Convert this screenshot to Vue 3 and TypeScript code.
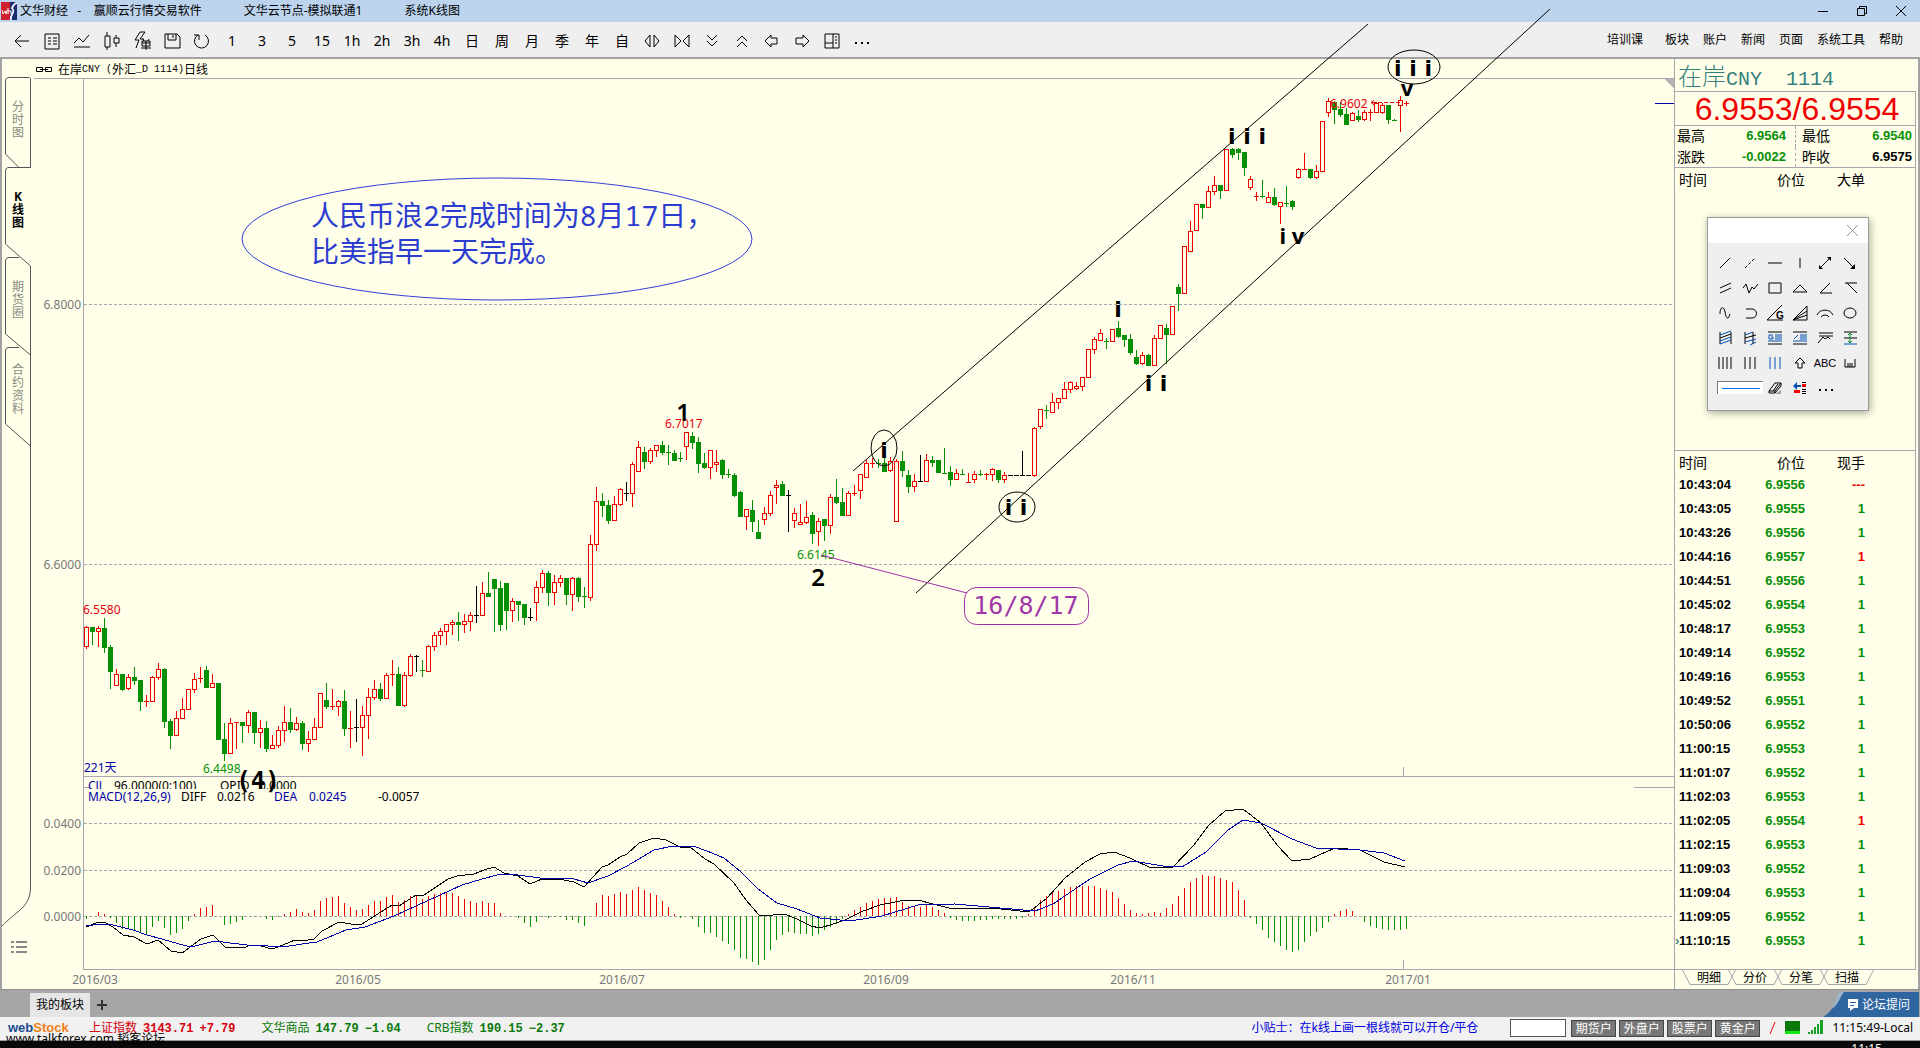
<script setup lang="ts">
type Kind = 'r' | 'g' | 'b'
interface Candle { x: number; kind: Kind; high: number; top: number; bottom: number; low: number }
interface Tick { time: string; price: string; lot: string; tone: string }

// Each entry: colour, high, body top, body bottom, low, in thirds of a pixel below the segment origin.
const segments: { origin: number; rows: string }[] = [
  {
    origin: 560,
    rows: `r198,203,260,264 g202,202,215,254 r198,205,214,258 g174,205,262,278 g255,262,335,386 r327,343,377,377
g343,343,389,392 r343,352,385,387 g321,351,361,374 g361,361,424,450 r405,424,424,440 r348,352,424,424 r311,327,352,357
g324,328,485,503 g477,484,527,566 r453,474,526,526 r415,448,475,475 r388,388,448,448 r339,357,388,398 r323,356,356,368
g318,331,383,383 r343,370,382,382 g370,370,539,539 g489,538,580,600 r474,489,580,580 r488,488,488,566 g486,487,497,548
r452,457,497,518 g457,457,518,551 r480,505,517,562 g484,505,566,575 r525,556,566,566 r499,511,556,563 r438,487,511,545
g444,487,509,517 r471,490,508,510 g484,490,551,569 r514,538,550,575 r475,502,538,538 r400,400,502,502 g369,420,440,444
r388,439,439,448 r420,424,439,467 g390,423,506,525 r453,504,504,563 b418,502,502,543 r438,466,502,585 r385,412,466,536
r362,388,412,418 g370,387,416,422 r339,346,416,416 r300,344,344,375 g321,342,437,437 r336,346,436,438 r283,290,346,350
b287,290,290,335 g300,332,332,350 r255,259,335,335 r216,226,260,270 r204,214,226,254 r193,193,214,252 r181,187,193,224
g156,187,194,242 r162,184,193,218 r156,166,184,212 b78,166,166,188 r67,100,166,166 g37,100,110,110 g57,58,86,215
g64,85,194,210 g70,70,152,208 r114,124,152,185 g124,124,134,182 g133,133,173,194 b144,172,172,180 r64,82,127,180
r30,40,82,98 g34,40,98,136 r46,67,97,134 r45,55,67,80 g55,55,104,134 r52,55,103,150 g52,55,110,124 g82,110,110,143`,
  },
  {
    origin: 380,
    rows: `r467,493,652,662 r323,364,493,510 g340,364,377,410 g362,376,422,430 r350,373,421,421 r325,328,374,376
b308,340,340,360 r248,254,340,380 r184,202,274,274 g202,216,245,264 r204,211,244,250 r196,196,211,228 g184,195,218,222
g196,218,218,252 g210,219,242,242 g216,236,236,244 r157,157,199,238 g157,168,188,206 g172,186,250,278 g220,250,263,266
r211,211,262,294 r211,247,253,275 g237,240,284,296 g268,284,284,292 g280,286,345,350 g334,337,410,410 r388,388,409,449
g361,391,425,455 g421,457,476,476 r382,400,419,434 r334,346,400,406 r300,316,322,370 g304,312,346,346 b330,346,346,453
r385,400,422,443 r373,427,433,433 r364,412,427,430 g396,406,461,491 r414,424,454,497 g417,418,437,482 r343,352,436,461
g298,351,368,370 g324,367,407,407 r333,340,406,406 r315,339,339,346 r283,283,331,355 r240,250,293,293 r235,250,250,262
g238,249,249,262 g222,249,275,275 r232,244,271,275 r238,244,424,424 g213,243,272,290 g270,287,320,338 r283,304,320,334
b226,304,304,304 r222,241,304,304 g229,241,246,260 g240,241,278,278 g205,279,279,280 g258,278,299,317 r267,280,298,298
g267,282,282,284 r279,308,308,308 r273,283,298,307 g270,284,284,286 r280,284,284,298 r265,268,283,300 g270,271,299,307
r276,286,298,306 b286,286,286,286 b286,286,286,286 b213,286,286,286 b286,286,286,286`,
  },
  {
    origin: 60,
    rows: `r1102,1105,1246,1250 r1048,1048,1099,1106 g1035,1052,1052,1074 r1000,1027,1057,1057 r1015,1015,1027,1044
r966,988,1015,1015 r963,967,988,998 r966,979,985,988 r952,952,979,992 r868,868,952,952 r832,838,868,880 r808,820,841,841
g835,845,845,866 r808,808,844,844 g783,804,828,832 g825,826,838,860 g823,838,878,884 g870,891,911,914 r876,886,910,912
g882,886,917,917 r826,835,916,916 r796,796,835,835 g792,804,824,911 r739,739,823,823 g673,682,701,752 r559,559,700,700
r483,514,574,574 r433,433,511,511 g432,433,443,476 r378,394,442,442 r348,376,394,404 g376,376,391,416 r268,268,391,391
g264,268,284,293 g264,268,278,299 g276,277,323,347 r348,358,382,388 r396,409,409,422 g360,410,410,413 r396,412,427,428
g384,412,434,437 r427,427,439,490 g378,430,430,438 g421,423,440,449 r324,328,352,356 r279,328,328,328 g328,328,353,356
r316,334,352,354 r184,184,334,334 r114,124,157,170 g124,126,149,191 g126,148,163,168 g145,163,194,194 r156,160,181,181
g150,169,177,184 r150,157,178,180 r147,156,156,180 r126,130,157,157 r130,136,157,160 g135,136,178,191 g178,180,180,182
r108,121,136,215 r124,131,131,137`,
  },
]

const FIRST_X = 86
const STEP = 6
const colour: Record<Kind, string> = { r: '#f00000', g: '#069006', b: '#000000' }

const candles: Candle[] = segments
  .flatMap(s => s.rows.split(/\s+/).map(row => ({
    kind: row[0] as Kind,
    y: row.slice(1).split(',').map(v => s.origin + Math.floor(Number(v) / 3)),
  })))
  .map(({ kind, y }, i) => ({ x: FIRST_X + i * STEP, kind, high: y[0], top: y[1], bottom: y[2], low: y[3] }))

const wicks = (kind: Kind) => candles.filter(c => c.kind === kind).map(c => {
  const parts: string[] = []
  if (c.bottom - c.top < 2) {
    parts.push(`M${c.x} ${c.high}h1V${c.low + 1}h-1z`)
    parts.push(`M${c.x - 2} ${c.top}h5v1h-5z`)
  } else {
    if (c.high < c.top) parts.push(`M${c.x} ${c.high}h1V${c.top}h-1z`)
    if (c.low > c.bottom) parts.push(`M${c.x} ${c.bottom}h1V${c.low + 1}h-1z`)
    if (kind === 'g') parts.push(`M${c.x - 2} ${c.top}h5V${c.bottom + 1}h-5z`)
    else parts.push(`M${c.x - 2} ${c.top}h5V${c.bottom + 1}h-5zM${c.x - 1} ${c.top + 1}V${c.bottom}h3V${c.top + 1}z`)
  }
  return parts.join('')
}).join('')
const kinds: Kind[] = ['r', 'g', 'b']

const histogram = [
  -3, 0, 4, 2, -2, -7, -13, -13, -14, -17, -18, -11, -5, -12, -19, -17, -13, -5, 2, 8, 9, 11, 0, -9, -8, -6, -4, 0, -1, 0,
  -3, -4, -1, 2, 4, 7, 4, 3, 6, 15, 18, 19, 20, 13, 9, 6, 7, 11, 15, 15, 19, 21, 14, 16, 20, 20, 17, 20, 22, 23,
  24, 23, 20, 17, 15, 13, 15, 13, 13, 3, 0, 0, -2, -7, -11, -6, -1, -2, -1, -1, -4, -4, -7, -10, 0, 13, 21, 20, 22, 24,
  22, 26, 29, 26, 23, 21, 15, 9, 2, -2, 0, -3, -11, -17, -17, -21, -25, -28, -34, -42, -43, -46, -49, -44, -34, -24, -19, -16, -17, -18,
  -18, -20, -18, -14, -11, -8, -3, 2, 6, 9, 13, 15, 17, 18, 18, 19, 14, 10, 10, 9, 11, 9, 6, 3, -2, -4, -5, -5, -5, -4,
  -4, -3, -3, -3, -3, -3, -2, 2, 9, 16, 20, 23, 25, 27, 29, 30, 30, 30, 30, 28, 26, 24, 18, 12, 6, 3, 2, 3, 4, 3,
  8, 12, 20, 28, 34, 38, 41, 40, 40, 38, 36, 34, 26, 16, -2, -8, -14, -22, -26, -30, -34, -36, -34, -26, -20, -16, -12, -6, 2, 5,
  7, 5, 0, -6, -10, -12, -13, -14, -14, -14, -13,
]
const ZERO_Y = 916
const bars = (sign: number) => histogram
  .map((h, i) => (Math.sign(h) === sign ? `M${FIRST_X + i * STEP} ${ZERO_Y}h1v${-h}h-1z` : ''))
  .join('')

const diff = '86,927 96,923 104,922 113,927 123,935 134,937 147,944 158,940 171,951 182,953 193,945 201,939 213,935 225,947 243,948 251,945 261,946 272,949 283,945 295,940 302,941 314,939 322,931 339,922 351,924 362,924 373,917 392,905 399,906 416,895 424,895 448,879 457,876 474,874 484,870 494,867 504,873 518,876 530,884 542,879 559,879 574,882 584,887 593,877 602,867 608,865 620,857 627,854 639,843 654,838 666,840 680,847 690,847 705,859 714,864 734,883 746,900 759,915 770,916 776,914 787,915 799,920 811,926 820,928 833,924 845,920 863,911 880,905 900,901 918,900 933,904 949,908 992,908 1029,912 1047,898 1065,878 1085,862 1100,854 1114,852 1130,858 1151,868 1173,867 1194,845 1209,825 1225,811 1243,809 1261,823 1277,845 1292,861 1310,859 1335,848 1360,850 1384,862 1405,867'
const dea = '86,926 101,924 113,925 133,930 147,935 162,939 179,944 191,947 215,941 230,943 247,945 268,946 283,947 302,944 317,942 346,930 365,927 394,916 416,906 438,896 462,885 482,879 501,874 518,875 540,878 574,879 588,883 608,876 627,866 654,850 673,846 693,846 707,851 724,858 741,872 758,889 777,903 797,909 820,918 850,921 882,916 918,905 955,904 1000,908 1035,911 1053,904 1090,879 1118,865 1133,861 1163,866 1182,867 1206,852 1228,830 1243,820 1261,823 1292,839 1316,848 1360,850 1384,853 1405,861'

const gridLines = [
  { y: 304, label: '6.8000' }, { y: 564, label: '6.6000' },
  { y: 823, label: '0.0400' }, { y: 870, label: '0.0200' }, { y: 916, label: '0.0000' },
]
const months = [
  { x: 95, label: '2016/03' }, { x: 358, label: '2016/05' }, { x: 622, label: '2016/07' },
  { x: 886, label: '2016/09' }, { x: 1133, label: '2016/11' }, { x: 1408, label: '2017/01' },
]

const periods = ['1', '3', '5', '15', '1h', '2h', '3h', '4h', '日', '周', '月', '季', '年', '自']
const leadIcons = [
  { name: '返回', d: 'M17 10H4M9 4L3 10L9 16' },
  { name: '报价', d: 'M3 3H17V18H3ZM6 7H9M11 7H15M6 10H9M11 10H15M6 13H9M11 13H15' },
  { name: '走势', d: 'M2 12L7 7L11 11L17 4M2 16H18' },
  { name: 'K线', d: 'M3 5H8V16H3ZM5 1V5M5 16V19M12 7H17V12H12ZM14 4V7M14 12V16' },
  { name: '闪弹', d: 'M8 1L3 9H7L4 17M8 1H13L8 8H12M11 8L12 10M17 8L16 10M10 10H18V15H10ZM10 12H18M14 10V19M9 17H19' },
  { name: '保存', d: 'M3 3H15L18 6V17H3ZM6 3V9H14V3M11 4V7' },
  { name: '刷新', d: 'M6 4A7 7 0 1 0 13 4M2 4H7V9' },
]
const tailIcons = [
  { name: '横向缩小', d: 'M8 4L3 10L8 16ZM12 4L17 10L12 16Z' },
  { name: '横向放大', d: 'M3 4L9 10L3 16ZM17 4L11 10L17 16Z' },
  { name: '向下', d: 'M5 4L10 9L15 4M5 10L10 15L15 10' },
  { name: '向上', d: 'M5 10L10 5L15 10M5 16L10 11L15 16' },
  { name: '左移', d: 'M3 10L9 4V7H15V13H9V16Z' },
  { name: '右移', d: 'M17 10L11 4V7H4V13H11V16Z' },
  { name: '布局', d: 'M3 3H17V17H3ZM11 3V17M3 12H11M13 6H15M13 9H15M13 12H15' },
]
const menus = ['板块', '账户', '新闻', '页面', '系统工具', '帮助']
const sideTabs = [
  { label: '分时图', on: false }, { label: 'K线图', on: true },
  { label: '期货圈', on: false }, { label: '合约资料', on: false },
]

// Drawing tools, five rows of six; k = black strokes, u = blue, n = green, f = black fill.
const tools: { name: string; k?: string; u?: string; n?: string; f?: string; dash?: boolean }[] = [
  { name: '直线', k: 'M5 15L15 5' },
  { name: '虚线', k: 'M5 15L15 5', dash: true },
  { name: '水平线', k: 'M3 10H17' },
  { name: '垂直线', k: 'M10 5V15' },
  { name: '双箭头', k: 'M5 15L15 5', f: 'M4 12L8 16L4 16ZM16 8L12 4L16 4Z' },
  { name: '箭头', k: 'M4 5L14 15', f: 'M15 11V16H10Z' },
  { name: '平行线', k: 'M5 10L16 5M5 15L16 10' },
  { name: '波浪', k: 'M3 10L6 6L9 15L12 9L14 11L18 6' },
  { name: '矩形', k: 'M4 5H16V15H4Z' },
  { name: '三角形', k: 'M3 14L10 7L17 14Z' },
  { name: '角度', k: 'M15 5L5 15H17' },
  { name: '反角', k: 'M5 5H17M7 5L17 15' },
  { name: '正弦', k: 'M5 11C5 3 9 3 10 9S13 18 15 11' },
  { name: '弧线', k: 'M6 6H12A4 4 0 0 1 12 15H6' },
  { name: '江恩角', k: 'M2 17L17 2M2 17H18' },
  { name: '扇形', k: 'M3 17L17 3V17ZM3 17L17 8M3 17L17 12' },
  { name: '圆弧', k: 'M2 12A9 9 0 0 1 18 12M6 14A5 5 0 0 1 14 14' },
  { name: '椭圆', k: 'M10 5A6 5 0 1 0 10 15A6 5 0 1 0 10 5Z' },
  { name: '通道', k: 'M5 4V16M16 4V16M5 10L16 6', u: 'M5 7L16 3M5 13L16 9M5 16L16 12' },
  { name: '通道二', k: 'M5 4V16M13 4V16M5 10L16 7', u: 'M5 7L13 4M5 14L16 11M10 17L16 14' },
  { name: '黄金分割', k: 'M3 4H17M3 16H17', u: 'M10 7H17M10 9H17M10 11H17M3 13H17M8 7H4V11H8V9H6' },
  { name: '百分比', k: 'M3 4H17M3 16H17', u: 'M10 7H17M10 9H17M10 11H17M3 13H17M4 11L8 7' },
  { name: '区间', k: 'M4 5H18M4 8H18M3 15L8 9L10 11L13 9L15 11' },
  { name: '测量', k: 'M4 4H17M4 10H17', u: 'M4 16H17', n: 'M10 5V15M8 7L10 5L12 7M8 13L10 15L12 13' },
  { name: '周期线', k: 'M4 4V16M8 4V16M12 4V16M16 4V16' },
  { name: '等距线', k: 'M5 4V16M10 4V16M15 4V16' },
  { name: '斐波那契', u: 'M5 4V16M10 4V16M15 4V16' },
  { name: '上箭头', k: 'M10 5L15 10H12V15H8V10H5Z' },
  { name: '文字' },
  { name: '标尺', k: 'M5 6V14H15V6M8 10V14M10 10V14M12 10V14' },
]

const ticks: Tick[] = [
  ['10:43:04', '6.9556', '---'], ['10:43:05', '6.9555', '1'], ['10:43:26', '6.9556', '1'], ['10:44:16', '6.9557', '1r'],
  ['10:44:51', '6.9556', '1'], ['10:45:02', '6.9554', '1'], ['10:48:17', '6.9553', '1'], ['10:49:14', '6.9552', '1'],
  ['10:49:16', '6.9553', '1'], ['10:49:52', '6.9551', '1'], ['10:50:06', '6.9552', '1'], ['11:00:15', '6.9553', '1'],
  ['11:01:07', '6.9552', '1'], ['11:02:03', '6.9553', '1'], ['11:02:05', '6.9554', '1r'], ['11:02:15', '6.9553', '1'],
  ['11:09:03', '6.9552', '1'], ['11:09:04', '6.9553', '1'], ['11:09:05', '6.9552', '1'], ['11:10:15', '6.9553', '1'],
].map(([time, price, lot]) => ({
  time, price, lot: lot.replace('r', ''), tone: lot === '1' ? 'up' : 'down',
}))
const detailTabs = ['明细', '分价', '分笔', '扫描']
const accounts = ['期货户', '外盘户', '股票户', '黄金户']
const indices = [
  { name: '上证指数', value: '3143.71', change: '+7.79', tone: 'rise' },
  { name: '文华商品', value: '147.79', change: '−1.04', tone: 'fall' },
  { name: 'CRB指数', value: '190.15', change: '−2.37', tone: 'fall' },
]
</script>

<template>
  <div class="window">
    <header class="titlebar">
      <svg class="logo" width="18" height="20" viewBox="0 0 18 20" aria-hidden="true">
        <path d="M1 1H17V19H1Z" fill="#1b2a6b" /><path d="M1 1H10V19H1Z" fill="#d0202c" />
        <path d="M11 19C10 12 16 12 12 7C14 3 16 2 17 2" stroke="#e8f0ff" stroke-width="2" fill="none" />
        <path d="M2 9L3 13L5 10L6 13L7 9M8 7V13M8 10H11V13" stroke="#fff" fill="none" />
      </svg>
      <span>文华财经&nbsp;&nbsp; -&nbsp;&nbsp;&nbsp; 赢顺云行情交易软件</span>
      <span>文华云节点-模拟联通1</span>
      <span>系统K线图</span>
      <div class="winbtns">
        <button type="button" aria-label="最小化"><svg width="12" height="12"><path d="M1 6.500H11" /></svg></button>
        <button type="button" aria-label="还原"><svg width="12" height="12"><path d="M1.500 3.500H8.500V10.500H1.500ZM3.500 3.500V1.500H10.500V8.500H8.500" /></svg></button>
        <button type="button" aria-label="关闭"><svg width="12" height="12"><path d="M1 1L11 11M11 1L1 11" /></svg></button>
      </div>
    </header>

    <nav class="toolbar">
      <button v-for="icon in leadIcons" :key="icon.name" type="button" :aria-label="icon.name">
        <svg width="20" height="20" viewBox="0 0 20 20"><path :d="icon.d" /></svg>
      </button>
      <button v-for="p in periods" :key="p" type="button">{{ p }}</button>
      <button v-for="icon in tailIcons" :key="icon.name" type="button" :aria-label="icon.name">
        <svg width="20" height="20" viewBox="0 0 20 20"><path :d="icon.d" /></svg>
      </button>
      <button type="button" aria-label="更多">
        <svg width="20" height="20" viewBox="0 0 20 20"><path d="M3 11h2v2h-2zM9 11h2v2h-2zM15 11h2v2h-2z" class="solid" /></svg>
      </button>
      <div class="menus">
        <a href="#" class="course">培训课</a>
        <a v-for="m in menus" :key="m" href="#">{{ m }}</a>
      </div>
    </nav>

    <main class="workspace">
      <aside class="side">
        <svg class="side-lines" width="32" height="930" viewBox="2 59 32 930" aria-hidden="true">
          <path d="M30.500 167.500V78.500Q30 77.500 28 77.500H8Q5.500 78 5.500 81V154L19 167.500M30.500 167.500H8Q5.500 168 5.500 171V244L30.500 266V888C30 908 16 911 2 926M19 257.500H8Q5.500 258 5.500 261V334L30.500 355M19 347.500H8Q5.500 348 5.500 351V424L30.500 446" />
          <path d="M11 942H14M16 942H27M11 947H14M16 947H27M11 952H14M16 952H27" class="menu-glyph" />
        </svg>
        <button v-for="t in sideTabs" :key="t.label" type="button" :class="{ on: t.on }"><span>{{ t.label }}</span></button>
      </aside>

      <section class="chart">
        <h1 class="chart-title">
          <svg width="16" height="8" viewBox="0 0 16 8" aria-hidden="true"><path d="M6.500 3V1.500H.5V5.500H6.500V4M9.500 3V1.500H15.500V5.500H9.500V4M4 3.500H12" /></svg>
          在岸<span class="half">CNY (</span>外汇<span class="half">_D 1114)</span>日线
        </h1>
        <svg class="plot" viewBox="34 78 1640 911" role="img" aria-label="在岸CNY日线图">
          <g class="frame">
            <path d="M34 78.500H1674M83.500 78V969.500H1674M83 776.500H1674M83 787.500H89M1634 787.500H1674M1403.500 767V776M1403.500 960V969" />
            <path v-for="g in gridLines" :key="g.y" :d="`M84 ${g.y + 0.5}H1674`" stroke-dasharray="3 2" />
            <path d="M1664 79H1674V88Z" class="corner" />
            <path d="M1655 103.500H1674" class="mark" />
          </g>
          <g class="axis">
            <text v-for="g in gridLines" :key="g.y" x="81" :y="g.y + 5" text-anchor="end">{{ g.label }}</text>
            <text v-for="m in months" :key="m.x" :x="m.x" y="984" text-anchor="middle">{{ m.label }}</text>
          </g>

          <g class="crisp">
            <path v-for="k in kinds" :key="k" :d="wicks(k)" :fill="colour[k]" />
            <path :d="bars(1)" fill="#f00000" />
            <path :d="bars(-1)" fill="#069006" />
            <polyline :points="diff" stroke="#000" fill="none" />
            <polyline :points="dea" stroke="#0000a8" fill="none" />
          </g>

          <g class="small">
            <g fill="#e80010">
              <text x="83" y="614">6.5580</text>
              <text x="665" y="428">6.7017</text>
              <text x="1330" y="108">6.9602</text>
              <path d="M1372 102.500H1400M1371 102.500L1375 99.500M1371 102.500L1375 105.500" stroke="#e80010" stroke-dasharray="4 2" />
            </g>
            <g fill="#069006">
              <text x="203" y="773">6.4498</text>
              <text x="797" y="559">6.6145</text>
            </g>
            <text x="84" y="772" class="navy">221天</text>
            <svg x="84" y="779" width="300" height="10" viewBox="84 779 300 10">
              <text x="88" y="790" class="navy">CJL</text>
              <text x="114" y="790">96.0000(0:100)</text>
              <text x="220" y="790">OPID</text>
              <text x="259" y="790">0.0000</text>
            </svg>
            <text x="88" y="801" class="navy">MACD(12,26,9)</text>
            <text x="181" y="801">DIFF</text>
            <text x="217" y="801">0.0216</text>
            <text x="274" y="801" class="navy">DEA</text>
            <text x="309" y="801" class="navy">0.0245</text>
            <text x="378" y="801">-0.0057</text>
          </g>

          <g class="strokes">
            <path d="M853 471L1368 24M916 593L1550 9" />
            <ellipse cx="884" cy="448" rx="13" ry="18" />
            <ellipse cx="1017" cy="507" rx="18" ry="15" />
            <ellipse cx="1414" cy="67" rx="26" ry="17" />
            <ellipse cx="497" cy="239" rx="255" ry="61" class="blue" />
            <path d="M821 555L967 593" class="purple" />
            <rect x="964.500" y="587.500" width="124" height="37" rx="12" class="purple" />
          </g>
          <g class="wave" text-anchor="middle">
            <text x="683" y="421">1</text>
            <text x="818" y="586">2</text>
            <text x="258" y="789" class="degree">(4)</text>
            <text x="1407" y="96" class="letter">v</text>
            <text x="1292" y="244" class="letter">i v</text>
          </g>
          <g class="roman" text-anchor="middle">
            <text x="884" y="458">i</text>
            <text x="1016" y="515">i i</text>
            <text x="1118" y="317">i</text>
            <text x="1156" y="391">i i</text>
            <text x="1247" y="144">i i i</text>
            <text x="1413" y="76">i i i</text>
          </g>
          <text x="1026" y="614" text-anchor="middle" class="date-note">16/8/17</text>
          <g class="note">
            <text x="311" y="226">人民币浪2完成时间为8月17日，</text>
            <text x="311" y="262">比美指早一天完成。</text>
          </g>
        </svg>
      </section>

      <aside class="quote">
        <h2>在岸<span>CNY&nbsp; 1114</span></h2>
        <div class="framed">
          <p class="last">6.9553/6.9554</p>
          <dl class="stats">
            <div><dt>最高</dt><dd class="up">6.9564</dd></div>
            <div><dt>最低</dt><dd class="up">6.9540</dd></div>
            <div><dt>涨跌</dt><dd class="up">-0.0022</dd></div>
            <div><dt>昨收</dt><dd>6.9575</dd></div>
          </dl>
          <div class="big-orders">
            <table class="trades">
              <thead><tr><th>时间</th><th>价位</th><th>大单</th></tr></thead>
            </table>
            <div class="palette" role="dialog" aria-label="画线工具">
              <div class="palette-head">
                <button type="button" aria-label="关闭画线工具"><svg width="11" height="11"><path d="M0 0L11 11M11 0L0 11" /></svg></button>
              </div>
              <div class="palette-grid">
                <button v-for="t in tools" :key="t.name" type="button" :aria-label="t.name">
                  <svg width="20" height="20" viewBox="0 0 20 20">
                    <path v-if="t.k" :d="t.k" class="ink" :stroke-dasharray="t.dash ? '3 2' : undefined" />
                    <path v-if="t.u" :d="t.u" class="ink blue" />
                    <path v-if="t.n" :d="t.n" class="ink green" />
                    <path v-if="t.f" :d="t.f" />
                    <text v-if="t.name === '文字'" x="10" y="14" text-anchor="middle">ABC</text>
                    <text v-if="t.name === '江恩角'" x="15" y="16" text-anchor="middle" class="gann">G</text>
                  </svg>
                </button>
                <button type="button" class="line-style" aria-label="线型"><i></i></button>
                <button type="button" aria-label="橡皮">
                  <svg width="20" height="20" viewBox="0 0 20 20"><path d="M10 16H16V12Z" fill="#a0a0a0" /><path d="M4 13L10 5H16L10 13ZM4 13V15H10L16 8V5M10 13V15M8 13L13 6" class="ink" /></svg>
                </button>
                <button type="button" aria-label="颜色">
                  <svg width="20" height="20" viewBox="0 0 20 20"><path d="M3 8L7 4V7H11V9H7V12Z" fill="#0050b0" /><path d="M12 6H16V9H12ZM4 12H10V15H4Z" fill="#f00000" /><path d="M12 4.500H16M12 11.500H16M12 13.500H16M12 15.500H16" class="ink" /></svg>
                </button>
                <button type="button" aria-label="更多工具">
                  <svg width="20" height="20" viewBox="0 0 20 20"><path d="M4 11h2v2h-2zM10 11h2v2h-2zM16 11h2v2h-2z" /></svg>
                </button>
              </div>
            </div>
          </div>
          <table class="trades ticks">
            <thead><tr><th>时间</th><th>价位</th><th>现手</th></tr></thead>
            <tbody>
              <tr v-for="(t, i) in ticks" :key="i" :class="{ latest: i === ticks.length - 1 }">
                <td>{{ t.time }}</td><td class="up">{{ t.price }}</td><td :class="t.tone">{{ t.lot }}</td>
              </tr>
            </tbody>
          </table>
        </div>
        <div class="detail-tabs">
          <button v-for="t in detailTabs" :key="t" type="button">
            <svg width="54" height="16" viewBox="0 0 54 16" aria-hidden="true"><path d="M0 0L8 15.500H46L54 0" /></svg>{{ t }}
          </button>
        </div>
      </aside>
    </main>

    <div class="boards">
      <button type="button" class="board">我的板块</button>
      <button type="button" class="add" aria-label="新建板块"><svg width="10" height="10"><path d="M5 0V10M0 5H10" /></svg></button>
      <a href="#" class="forum">
        <svg class="wedge" width="96" height="25" viewBox="0 0 96 25" aria-hidden="true">
          <path d="M0 25C12 18 12 8 19 0H96V25Z" fill="#2f66a0" /><path d="M9 17L16 0H21C16 6 16 12 9 17Z" fill="#9db4cc" />
        </svg>
        <svg width="12" height="12" viewBox="0 0 12 12" aria-hidden="true"><path d="M1 0H11V9H7L3 12V9H1Z" fill="#fff" /><path d="M3 3.500H9M3 6.500H7" stroke="#2f66a0" /></svg>
        <span>论坛提问</span>
      </a>
    </div>

    <footer class="status">
      <span class="brand"><b>web</b><i>Stock</i></span>
      <span v-for="x in indices" :key="x.name" class="index" :class="x.tone">{{ x.name }}<b>{{ x.value }}</b><b>{{ x.change }}</b></span>
      <span class="tip">小贴士：在k线上画一根线就可以开仓/平仓</span>
      <input type="text" aria-label="合约代码" />
      <button v-for="a in accounts" :key="a" type="button">{{ a }}</button>
      <svg class="signals" width="54" height="18" viewBox="0 0 54 18" aria-hidden="true">
        <path d="M1 15L6 3" stroke="#f00000" />
        <rect x="16" y="2" width="15" height="13" fill="#087808" /><rect x="16" y="12" width="15" height="3" fill="#10e810" />
        <path d="M39 13h2v2h-2zM42 11h2v4h-2zM45 8h2v7h-2zM48 5h2v10h-2zM51 1h3v14h-3z" fill="#18a028" />
      </svg>
      <time>11:15:49-Local</time>
      <span class="watermark">www.talkforex.com 韬客论坛</span>
    </footer>
    <div class="taskbar"><span>11:15</span></div>
  </div>
</template>

<style>
body { margin: 0; overflow: hidden; }
</style>

<style scoped>
.window {
  min-height: 100vh;
  display: flex;
  flex-direction: column;
  font: 12px/16px "Noto Sans", "Noto Sans CJK SC", sans-serif;
  color: #000;
  background: #ffffe9;
}
button { border: 0; margin: 0; padding: 0; background: none; font: inherit; color: inherit; }
a { color: inherit; text-decoration: none; }
svg { display: block; }
h1, h2, p, dl, dd { margin: 0; font-weight: normal; }
.up { color: #069006; }
.down { color: #f00000; }

.titlebar {
  display: flex;
  align-items: center;
  gap: 42px;
  height: 22px;
  padding-bottom: 1px;
  box-sizing: border-box;
  background: #bbd3ec;
  line-height: 20px;
}
.logo { margin-right: -40px; }
.winbtns { margin-left: auto; display: flex; }
.winbtns button { width: 39px; height: 21px; display: flex; align-items: center; justify-content: center; }
.winbtns svg path { fill: none; stroke: #000; }

.toolbar {
  display: flex;
  align-items: center;
  height: 35px;
  padding: 0 17px 0 7px;
  background: #efefef;
  border-bottom: 2px solid #a2a2a2;
}
.toolbar button {
  width: 30px;
  height: 32px;
  padding-top: 3px;
  display: flex;
  align-items: center;
  justify-content: center;
  font-size: 14px;
}
.toolbar svg path { fill: none; stroke: #000; }
.toolbar svg .solid { fill: #000; stroke: none; }
.menus { margin-left: auto; display: flex; gap: 14px; }
.menus .course { margin-right: 8px; }

.workspace { flex: 1; display: flex; align-items: stretch; border-left: 2px solid #a2a2a2; border-bottom: 1px solid #909090; box-sizing: border-box; }
.side { position: relative; width: 32px; padding-top: 18px; box-sizing: border-box; flex: none; }
.side-lines { position: absolute; left: 0; top: 0; }
.side-lines path { fill: none; stroke: #55555c; }
.side-lines .menu-glyph { stroke: #888; stroke-width: 2; shape-rendering: crispEdges; }
.side button { position: relative; width: 32px; height: 90px; padding-bottom: 6px; box-sizing: border-box; display: flex; align-items: center; justify-content: center; color: #8a8a80; }
.side button span { width: 12px; line-height: 13px; word-break: break-all; }
.side .on { color: #000; font-weight: bold; }

.chart { flex: 1; min-width: 0; }
.chart-title { display: flex; align-items: center; height: 19px; padding: 2px 0 0 2px; box-sizing: border-box; font-size: 12px; line-height: 16px; }
.chart-title svg { margin-right: 6px; }
.chart-title svg path { fill: none; stroke: #000; }
.half { font-family: "Liberation Mono", monospace; font-size: 10px; white-space: pre; }
.plot { position: relative; width: 100%; height: auto; overflow: visible; pointer-events: none; z-index: 1; }
.frame path { fill: none; stroke: #a8a4b0; shape-rendering: crispEdges; }
.frame .corner { fill: #b4b4b4; stroke: none; }
.frame .mark { stroke: #0000a8; }
.axis { fill: #77777a; font-size: 12px; }
.crisp { shape-rendering: crispEdges; }
.small { font-size: 12px; }
.small .navy { fill: #0000a8; }
.strokes { fill: none; stroke: #000; }
.strokes .blue { stroke: #3040d8; }
.strokes .purple { stroke: #a030a8; }
.wave { font-size: 24px; font-weight: 600; }
.wave .letter { font-size: 22px; font-weight: bold; }
.wave .degree { font-family: "DejaVu Sans Mono", monospace; font-size: 24px; font-weight: bold; }
.roman { font-family: "DejaVu Sans", sans-serif; font-size: 22px; font-weight: bold; }
.date-note { font-family: "DejaVu Sans Mono", monospace; font-size: 25px; fill: #a038a8; }
.note { font-family: "Noto Sans Mono", "Noto Sans CJK SC", sans-serif; font-size: 28px; fill: #2c3cd0; }

.quote { width: 246px; flex: none; border-left: 1px solid #a8a4b0; border-right: 2px solid #a2a2a2; box-sizing: border-box; display: flex; flex-direction: column; }
.quote h2 { height: 32px; padding: 0 3px; font-size: 24px; line-height: 34px; color: #35807c; font-weight: 300; box-sizing: border-box; }
.quote h2 span { font-family: "Liberation Mono", monospace; font-size: 20px; }
.framed { border: 1px solid #a8a4b0; border-left: 0; margin-right: 2px; height: 877px; flex: none; display: flex; flex-direction: column; }
.last { height: 33px; border-bottom: 1px solid #a8a4b0; font: 32px/34px "Liberation Sans", sans-serif; color: #f00000; text-align: center; padding-left: 4px; }
.stats { display: grid; grid-template-columns: 120px 1fr; height: 41px; border-bottom: 1px solid #a8a4b0; font-size: 14px; line-height: 20px; }
.stats div { display: flex; justify-content: space-between; padding: 0 9px 0 2px; }
.stats div:nth-child(even) { padding: 0 3px 0 6px; border-left: 1px dashed #a8a4b0; }
.stats dd { font: bold 13px/20px "Liberation Sans", sans-serif; }
.big-orders { position: relative; height: 282px; border-bottom: 1px solid #a8a4b0; }
.trades { border-collapse: collapse; table-layout: fixed; width: 190px; font: bold 13px/24px "Liberation Sans", sans-serif; }
.trades th { font: 14px/22px "Noto Sans CJK SC", sans-serif; padding: 0; text-align: right; }
.trades th:first-child, .trades td:first-child { text-align: left; width: 66px; padding-left: 4px; }
.trades th:nth-child(2) { width: 60px; }
.trades td { padding: 0; text-align: right; height: 24px; }
.trades .latest td:first-child { position: relative; }
.latest td:first-child::before { content: "›"; position: absolute; left: 0; top: 0; color: #35807c; }

.palette { position: absolute; left: 32px; top: 49px; width: 160px; height: 192px; background: #efeff0; border: 1px solid #9a9a9a; box-shadow: 1px 2px 8px rgba(0, 0, 0, 0.35); }
.palette-head { height: 25px; background: #fff; display: flex; justify-content: flex-end; align-items: center; padding-right: 10px; }
.palette-head path { fill: none; stroke: #999; }
.palette-grid { display: grid; grid-template-columns: repeat(6, 25px); grid-auto-rows: 25px; padding: 7px 4px; }
.palette-grid button { display: flex; align-items: center; justify-content: center; }
.palette-grid svg { overflow: visible; }
.palette-grid text { font: 11px "Liberation Sans", sans-serif; }
.palette-grid .gann { font-weight: bold; font-size: 10px; }
.ink { fill: none; stroke: #000; }
.ink.blue { stroke: #0050b0; }
.ink.green { stroke: #009020; }
.palette-grid .line-style { grid-column: span 2; margin: 6px 0 6px 5px; width: 46px; background: #fff; border-left: 1px solid #777; border-top: 1px solid #777; }
.line-style i { width: 38px; height: 1px; background: #0070f0; }

.detail-tabs { display: flex; padding-left: 7px; margin-top: -1px; }
.detail-tabs button { position: relative; width: 46px; height: 17px; padding-left: 8px; white-space: nowrap; text-align: center; }
.detail-tabs svg { position: absolute; left: 0; top: 0; }
.detail-tabs path { fill: none; stroke: #a8a4b0; }

.boards { display: flex; align-items: flex-end; height: 27px; padding: 0 1px 0 30px; background: #a6a6a6; flex: none; }
.board { height: 24px; width: 60px; background: #e6e6e6; }
.add { width: 24px; height: 24px; display: flex; align-items: center; justify-content: center; }
.add path { stroke: #333; stroke-width: 2; }
.forum { position: relative; margin-left: auto; width: 96px; height: 25px; display: flex; align-items: center; gap: 3px; padding-left: 24px; box-sizing: border-box; color: #fff; }
.forum > * { position: relative; }
.forum .wedge { position: absolute; left: 0; top: 0; }

.status { position: relative; display: flex; align-items: center; height: 22px; padding: 0 7px 1px 8px; background: #f1f1f1; border-bottom: 1px solid #999; flex: none; }
.brand { width: 81px; font: bold 13px/18px "Liberation Sans", sans-serif; color: #f08018; }
.brand i { font-style: normal; }
.brand b { color: #1c4c90; }
.index { white-space: nowrap; margin-right: 26px; }
.index b { font-family: "Liberation Mono", monospace; margin-left: 6px; }
.rise { color: #d80010; }
.fall { color: #087808; }
.tip { margin-left: auto; margin-right: 32px; color: #0000e0; }
.status input { width: 56px; height: 18px; box-sizing: border-box; border: 1px solid #555; background: #fff; padding: 0; margin-right: 5px; border-radius: 0; }
.status button { width: 45px; height: 17px; margin-right: 3px; box-sizing: border-box; line-height: 15px; background: #777; border: 1px solid #444; color: #fff; }
.signals { margin: 0 9px 0 6px; }
.watermark { position: absolute; left: 6px; top: 14px; z-index: 1; }
.taskbar { height: 8px; background: #0a0a0a; color: #fff; display: flex; justify-content: flex-end; padding-right: 38px; overflow: hidden; flex: none; }
</style>
